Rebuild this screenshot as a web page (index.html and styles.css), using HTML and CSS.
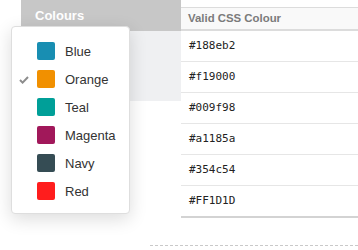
FILE: index.html
```html
<!DOCTYPE html>
<html>
<head>
<meta charset="utf-8">
<link rel="stylesheet" href="styles.css">
</head>
<body>
<div class="page">
  <div class="main">
    <div class="side">
      <div class="side-head">Colours</div>
      <div class="side-body"></div>
    </div>
    <div class="table">
      <div class="thead">Valid CSS Colour</div>
      <div class="row">#188eb2</div>
      <div class="row">#f19000</div>
      <div class="row">#009f98</div>
      <div class="row">#a1185a</div>
      <div class="row">#354c54</div>
      <div class="row last">#FF1D1D</div>
    </div>
  </div>
  <div class="dashed"></div>

  <ul class="menu">
    <li class="item"><span class="sw" style="background:#188eb2"></span>Blue</li>
    <li class="item checked">
      <svg class="check" width="10" height="8" viewBox="0 0 10 8"><polyline points="1,4 3.6,6.6 9,1" fill="none" stroke="#8c8c8c" stroke-width="2"/></svg>
      <span class="sw" style="background:#f19000"></span>Orange</li>
    <li class="item"><span class="sw" style="background:#009f98"></span>Teal</li>
    <li class="item"><span class="sw" style="background:#a1185a"></span>Magenta</li>
    <li class="item"><span class="sw" style="background:#354c54"></span>Navy</li>
    <li class="item"><span class="sw" style="background:#ff1d1d"></span>Red</li>
  </ul>
</div>
</body>
</html>
```

FILE: styles.css
```css
html, body {
  margin: 0;
  padding: 0;
  background: #fff;
}
body {
  font-family: "Liberation Sans", Arial, sans-serif;
  color: #333;
  overflow: hidden;
}
.page {
  position: relative;
  width: 358px;
  height: 250px;
}
.main {
  display: flex;
  align-items: flex-start;
  padding-left: 21px;
}
.side {
  width: 160px;
  flex: none;
}
.side-head {
  height: 31px;
  background: #c7c7c7;
  color: #fff;
  font-weight: bold;
  font-size: 13px;
  line-height: 31px;
  padding-left: 14px;
  box-sizing: border-box;
}
.side-body {
  height: 70px;
  background: #eff0f2;
}
.table {
  flex: 1;
  margin-top: 7px;
  min-width: 177px;
}
.thead {
  height: 21px;
  border-top: 1px solid #dcdcdc;
  border-bottom: 2px solid #dcdcdc;
  background: #f9f9f9;
  font-weight: bold;
  font-size: 11.4px;
  line-height: 21px;
  color: #7b7b7b;
  padding-left: 7px;
}
.row {
  height: 30px;
  border-bottom: 1px solid #e6e6e6;
  font-family: "DejaVu Sans Mono", monospace;
  font-size: 11px;
  line-height: 30px;
  padding-left: 8px;
  color: #222;
}
.row.last {
  border-bottom: 2px solid #d3d3d3;
}
.dashed {
  margin-top: 27px;
  margin-left: 150px;
  border-top: 1px dashed #c9c9c9;
}
.menu {
  position: absolute;
  left: 11px;
  top: 26px;
  width: 119px;
  height: 188px;
  box-sizing: border-box;
  margin: 0;
  padding: 10px 0;
  list-style: none;
  background: #fff;
  border: 1px solid #dedede;
  border-radius: 4px;
  box-shadow: 0 5px 18px rgba(0, 0, 0, 0.14);
}
.item {
  position: relative;
  display: flex;
  align-items: center;
  height: 28px;
  padding-left: 25px;
  font-size: 13px;
  color: #333;
}
.sw {
  width: 18px;
  height: 18px;
  border-radius: 2px;
  margin-right: 10px;
  flex: none;
}
.check {
  position: absolute;
  left: 7px;
  top: 11px;
}
```
